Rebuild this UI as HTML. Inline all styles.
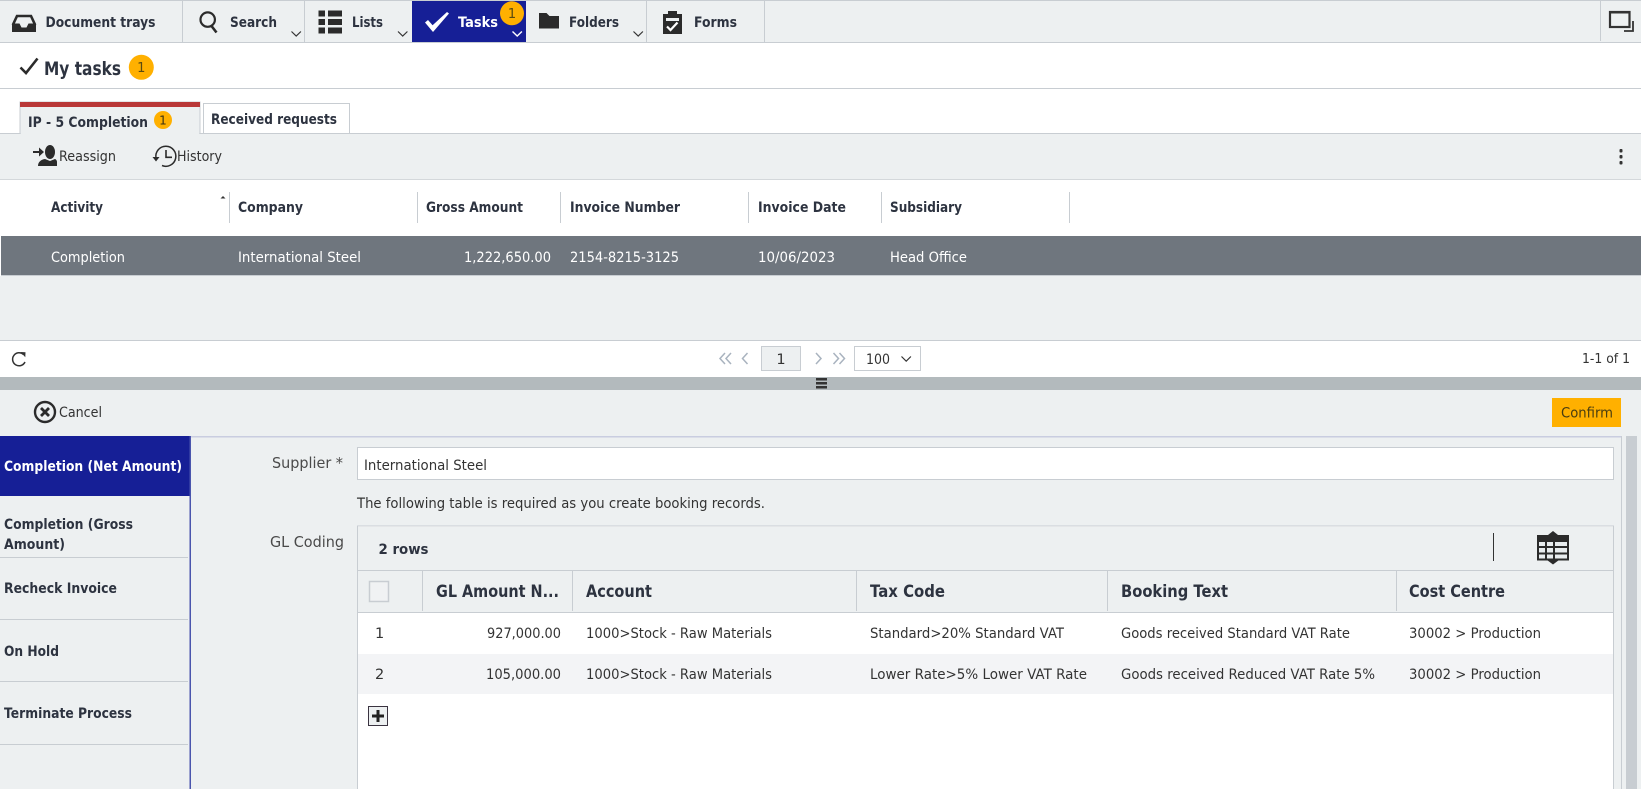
<!DOCTYPE html>
<html><head><meta charset="utf-8"><title>My tasks</title>
<style>
html,body{margin:0;padding:0;background:#fff;width:1641px;height:789px;overflow:hidden}
svg{display:block}
text{font-family:"DejaVu Sans","Liberation Sans",sans-serif;font-size:14.5px;fill:#333;}
.b{font-weight:bold;fill:#2d3340}
.w{fill:#fff}
.h{font-size:16.5px}
.l{fill:#4a4a4a;font-size:15px}
</style></head><body>
<svg width="1641" height="789" viewBox="0 0 1641 789" xmlns="http://www.w3.org/2000/svg">
<!-- top bar -->
<rect x="0" y="0" width="1641" height="42" fill="#edf0f1"/>
<rect x="0" y="0" width="1641" height="1" fill="#c8cdd2"/>
<rect x="0" y="42" width="1641" height="1" fill="#c8cdd2"/>
<g fill="#c8cdd2"><rect x="182" y="1" width="1" height="41"/><rect x="304" y="1" width="1" height="41"/><rect x="646" y="1" width="1" height="41"/><rect x="764" y="1" width="1" height="41"/><rect x="1600" y="1" width="1" height="40"/></g>
<rect x="412" y="1" width="114" height="41" fill="#161f96"/>
<!-- tray -->
<path d="M12.8 25 L17 16 H31 L35.2 25" fill="none" stroke="#2b2b2b" stroke-width="2.6"/>
<path d="M12 23.500 h7.500 l2 4 h5 l2-4 h7.500 v8.500 h-24z" fill="#2b2b2b"/>
<text class="b" x="45.5" y="27" textLength="110" lengthAdjust="spacingAndGlyphs">Document trays</text>
<!-- search -->
<circle cx="207.7" cy="19.6" r="7.2" fill="none" stroke="#2b2b2b" stroke-width="2.2"/>
<path d="M211.5 26 L216.5 32.5" stroke="#2b2b2b" stroke-width="2.6" fill="none"/>
<text class="b" x="230" y="27" textLength="47" lengthAdjust="spacingAndGlyphs">Search</text>
<!-- lists -->
<g fill="#2b2b2b"><rect x="318.5" y="10.5" width="6.5" height="6"/><rect x="328" y="10.5" width="14" height="6"/><rect x="318.5" y="19" width="6.5" height="6"/><rect x="328" y="19" width="14" height="6"/><rect x="318.5" y="27.5" width="6.5" height="6"/><rect x="328" y="27.5" width="14" height="6"/></g>
<text class="b" x="352" y="27" textLength="31" lengthAdjust="spacingAndGlyphs">Lists</text>
<!-- tasks -->
<path d="M425 22.5 l3-2.5 4.6 5.2 L447 12 l2 1.5 L433 32 z" fill="#fff"/>
<text class="b w" style="fill:#fff" x="458" y="27" textLength="40" lengthAdjust="spacingAndGlyphs">Tasks</text>
<circle cx="512" cy="13.3" r="12" fill="#ffb000"/>
<text x="512" y="18" text-anchor="middle" style="fill:#5a4a10;font-size:13px">1</text>
<!-- folders -->
<path d="M539 13 h7.5 l3 3 H559 v12.5 h-20z" fill="#2b2b2b"/>
<text class="b" x="569" y="27" textLength="50" lengthAdjust="spacingAndGlyphs">Folders</text>
<!-- forms -->
<path d="M663 14 h5 v-3 h9 v3 h5 v20 h-19z" fill="#2b2b2b"/>
<rect x="666" y="18" width="13" height="3" fill="#edf0f1"/>
<path d="M667 26.5 l3.5 3.5 7-7.5" fill="none" stroke="#fff" stroke-width="2.2"/>
<text class="b" x="694" y="27" textLength="43" lengthAdjust="spacingAndGlyphs">Forms</text>
<!-- chevrons -->
<g fill="none" stroke="#333" stroke-width="1.2"><path d="M291.5 31.5 l4.7 4.5 4.7-4.5"/><path d="M398 31.5 l4.7 4.5 4.7-4.5"/><path d="M633.5 31.5 l4.7 4.5 4.7-4.5"/></g>
<path d="M512.5 31.5 l4.7 4.5 4.7-4.5" fill="none" stroke="#fff" stroke-width="1.4"/>
<!-- window icon -->
<rect x="1610" y="12" width="19.5" height="15" fill="none" stroke="#333" stroke-width="2.2"/>
<rect x="1610" y="11" width="20" height="2.5" fill="#333"/>
<path d="M1633 21 V31 H1624" fill="none" stroke="#333" stroke-width="1.8"/>

<!-- my tasks -->
<rect x="0" y="43" width="1641" height="45" fill="#fff"/>
<rect x="0" y="88" width="1641" height="1" fill="#c8cdd2"/>
<path d="M20.5 67.500 L26 73 L37.5 58.500" fill="none" stroke="#2b2b2b" stroke-width="2.600"/>
<text class="b" style="font-size:19px" x="44" y="75" textLength="77" lengthAdjust="spacingAndGlyphs">My tasks</text>
<circle cx="141.3" cy="67.3" r="12.5" fill="#ffb000"/>
<text x="141.3" y="72" text-anchor="middle" style="fill:#5a4a10;font-size:13px">1</text>

<!-- tabs -->
<rect x="0" y="133" width="1641" height="1" fill="#c8cdd2"/>
<rect x="20" y="102" width="180" height="32" fill="#edf0f1" stroke="#c8cdd2" stroke-width="1"/>
<rect x="20" y="102" width="180" height="5" fill="#b93838"/>
<rect x="21" y="133" width="178" height="1" fill="#edf0f1"/>
<text class="b" x="28" y="127" textLength="120" lengthAdjust="spacingAndGlyphs">IP - 5 Completion</text>
<circle cx="163" cy="120" r="9" fill="#ffb000"/>
<text x="163" y="124.5" text-anchor="middle" style="fill:#3a3010;font-size:12px">1</text>
<path d="M203.5 133 V103.5 H349.5 V133" fill="#fff" stroke="#c8cdd2"/>
<text class="b" x="211" y="124" textLength="126" lengthAdjust="spacingAndGlyphs">Received requests</text>

<!-- toolbar -->
<rect x="0" y="134" width="1641" height="45" fill="#edf0f1"/>
<rect x="0" y="179" width="1641" height="1" fill="#d4d8db"/>
<path d="M33 151 h6 v-3.5 l5 4.5 -5 4.5 v-3.5 h-6z" fill="#2b2b2b"/>
<ellipse cx="50" cy="152" rx="5" ry="7" fill="#2b2b2b"/>
<path d="M38 166 c0-4 3-6.5 7-7 l5 2 5-2 c1.500 .5 2 2 2 3 v4z" fill="#2b2b2b"/>
<text x="59" y="161" textLength="57" lengthAdjust="spacingAndGlyphs">Reassign</text>
<path d="M156 158 A10 10 0 1 1 162 165.500" fill="none" stroke="#2b2b2b" stroke-width="1.5"/>
<path d="M152.500 157 h7 l-3.500 4.500z" fill="#2b2b2b"/>
<path d="M166 150 v7.300 h6" fill="none" stroke="#2b2b2b" stroke-width="1.6"/>
<text x="177" y="161" textLength="45" lengthAdjust="spacingAndGlyphs">History</text>
<g fill="#333"><rect x="1619.500" y="149" width="3" height="3.500" rx="1"/><rect x="1619.500" y="155" width="3" height="3.500" rx="1"/><rect x="1619.500" y="161" width="3" height="3.500" rx="1"/></g>

<!-- grid -->
<rect x="1" y="180" width="1640" height="56" fill="#fff"/>
<g fill="#c8cdd2"><rect x="229" y="192" width="1" height="31"/><rect x="417" y="192" width="1" height="31"/><rect x="560" y="192" width="1" height="31"/><rect x="748" y="192" width="1" height="31"/><rect x="881" y="192" width="1" height="31"/><rect x="1069" y="192" width="1" height="31"/></g>
<path d="M220.500 198.500 l2.500-2.500 2.500 2.500z" fill="#333"/>
<text class="b" x="51" y="212" textLength="52" lengthAdjust="spacingAndGlyphs">Activity</text>
<text class="b" x="238" y="212" textLength="65" lengthAdjust="spacingAndGlyphs">Company</text>
<text class="b" x="426" y="212" textLength="97" lengthAdjust="spacingAndGlyphs">Gross Amount</text>
<text class="b" x="570" y="212" textLength="110" lengthAdjust="spacingAndGlyphs">Invoice Number</text>
<text class="b" x="758" y="212" textLength="88" lengthAdjust="spacingAndGlyphs">Invoice Date</text>
<text class="b" x="890" y="212" textLength="72" lengthAdjust="spacingAndGlyphs">Subsidiary</text>
<rect x="1" y="236" width="1640" height="39" fill="#6f767e"/>
<rect x="1" y="275" width="1640" height="1" fill="#c8cdd2"/>
<text class="w" x="51" y="262" textLength="74" lengthAdjust="spacingAndGlyphs">Completion</text>
<text class="w" x="238" y="262" textLength="123" lengthAdjust="spacingAndGlyphs">International Steel</text>
<text class="w" x="464" y="262" textLength="87" lengthAdjust="spacingAndGlyphs">1,222,650.00</text>
<text class="w" x="570" y="262" textLength="109" lengthAdjust="spacingAndGlyphs">2154-8215-3125</text>
<text class="w" x="758" y="262" textLength="77" lengthAdjust="spacingAndGlyphs">10/06/2023</text>
<text class="w" x="890" y="262" textLength="77" lengthAdjust="spacingAndGlyphs">Head Office</text>
<rect x="0" y="276" width="1641" height="64" fill="#edf0f1"/>

<!-- pager -->
<rect x="0" y="340" width="1641" height="1" fill="#c8cdd2"/>
<rect x="0" y="341" width="1641" height="36" fill="#fff"/>
<path d="M23.500 354.500 A6.500 6.500 0 1 0 25 362" fill="none" stroke="#333" stroke-width="1.500"/>
<path d="M20.500 352 l5 .2 -.2 5z" fill="#333"/>
<g fill="none" stroke="#a9b3bf" stroke-width="1.500">
<path d="M725 353 l-5 5.500 5 5.500M731 353 l-5 5.500 5 5.500"/>
<path d="M747.500 353 l-5 5.500 5 5.500"/>
<path d="M816 353 l5 5.500 -5 5.500"/>
<path d="M833.500 353 l5 5.500 -5 5.500M839.500 353 l5 5.500 -5 5.500"/>
</g>
<rect x="761.500" y="346.500" width="39" height="24" fill="#edf0f1" stroke="#c8cdd2"/>
<text x="781" y="364" text-anchor="middle">1</text>
<rect x="854.500" y="346.500" width="66" height="24" fill="#fff" stroke="#c8cdd2"/>
<text x="866" y="364" textLength="24" lengthAdjust="spacingAndGlyphs">100</text>
<path d="M901.500 356.500 l4.700 4.700 4.700-4.700" fill="none" stroke="#333" stroke-width="1.200"/>
<text x="1582" y="363" textLength="48" lengthAdjust="spacingAndGlyphs" style="font-size:13.5px">1-1 of 1</text>

<!-- splitter -->
<rect x="0" y="377" width="1641" height="13" fill="#b3babd"/>
<g fill="#333"><rect x="816" y="378" width="11" height="2.500"/><rect x="816" y="382" width="11" height="2.500"/><rect x="816" y="386" width="11" height="2.500"/></g>

<!-- action bar + lower bg -->
<rect x="0" y="390" width="1641" height="399" fill="#edf0f1"/>
<circle cx="45" cy="412" r="10" fill="none" stroke="#2b2b2b" stroke-width="2.400"/>
<path d="M41 408 l8 8M49 408 l-8 8" stroke="#2b2b2b" stroke-width="2.800" fill="none"/>
<text x="59" y="417" textLength="43" lengthAdjust="spacingAndGlyphs">Cancel</text>
<rect x="1552" y="398" width="69" height="29" fill="#ffb000"/>
<text x="1561" y="417.500" textLength="52" lengthAdjust="spacingAndGlyphs" style="fill:#4a3d10">Confirm</text>
<rect x="0" y="436" width="1621" height="1.500" fill="#c9cde0"/>

<!-- scrollbar -->
<rect x="1621" y="436" width="1" height="353" fill="#c8cdd2"/>
<rect x="1626" y="436" width="11" height="353" fill="#c8cdd2"/>

<!-- left nav -->
<rect x="0" y="436" width="190" height="60" fill="#161f96"/>
<rect x="189.500" y="436" width="1.500" height="353" fill="#4a55ad"/>
<text style="font-weight:bold;fill:#fff" x="4" y="471" textLength="178" lengthAdjust="spacingAndGlyphs">Completion (Net Amount)</text>
<text class="b" x="4" y="529" textLength="129" lengthAdjust="spacingAndGlyphs">Completion (Gross</text>
<text class="b" x="4" y="549" textLength="61" lengthAdjust="spacingAndGlyphs">Amount)</text>
<rect x="0" y="557" width="188" height="1" fill="#c8cdd2"/>
<text class="b" x="4" y="593" textLength="113" lengthAdjust="spacingAndGlyphs">Recheck Invoice</text>
<rect x="0" y="619" width="188" height="1" fill="#c8cdd2"/>
<text class="b" x="4" y="656" textLength="55" lengthAdjust="spacingAndGlyphs">On Hold</text>
<rect x="0" y="681" width="188" height="1" fill="#c8cdd2"/>
<text class="b" x="4" y="718" textLength="128" lengthAdjust="spacingAndGlyphs">Terminate Process</text>
<rect x="0" y="744" width="188" height="1" fill="#c8cdd2"/>

<!-- form -->
<text class="l" x="272" y="468" textLength="71" lengthAdjust="spacingAndGlyphs">Supplier *</text>
<rect x="357.500" y="447.500" width="1256" height="32" fill="#fff" stroke="#c8cdd2"/>
<text x="364" y="470" textLength="123" lengthAdjust="spacingAndGlyphs">International Steel</text>
<text x="357" y="508" textLength="408" lengthAdjust="spacingAndGlyphs">The following table is required as you create booking records.</text>
<text class="l" x="270" y="547" textLength="74" lengthAdjust="spacingAndGlyphs">GL Coding</text>

<!-- GL box -->
<rect x="357.500" y="526" width="1256" height="270" fill="#fff" stroke="#c8cdd2"/>
<rect x="358" y="527" width="1255" height="85" fill="#edf0f1"/>
<rect x="358" y="570" width="1255" height="1" fill="#c8cdd2"/>
<rect x="358" y="612" width="1255" height="1" fill="#c8cdd2"/>
<text class="b" x="378.500" y="554" textLength="50" lengthAdjust="spacingAndGlyphs">2 rows</text>
<rect x="1493" y="533" width="1" height="28" fill="#333"/>
<!-- table icon -->
<path d="M1537 535 h11 l5-4 5 4 h11 v7 h-32z" fill="#2b2b2b"/>
<rect x="1538" y="541" width="30" height="18.500" fill="#e8ecee" stroke="#2b2b2b" stroke-width="2"/>
<path d="M1546 541 V560 M1554 541 V560 M1537 547 H1569 M1537 553.500 H1569" stroke="#2b2b2b" stroke-width="2" fill="none"/>
<path d="M1547 560 h12 l-6 4.500z" fill="#2b2b2b"/>
<!-- header -->
<g fill="#c8cdd2"><rect x="422" y="571" width="1" height="40"/><rect x="572" y="571" width="1" height="40"/><rect x="856" y="571" width="1" height="40"/><rect x="1107" y="571" width="1" height="40"/><rect x="1396" y="571" width="1" height="40"/></g>
<rect x="369.500" y="581.500" width="19" height="20" fill="#f0f2f3" stroke="#c8cdd2" stroke-width="1.500"/>
<text class="b h" x="436" y="597" textLength="123" lengthAdjust="spacingAndGlyphs">GL Amount N...</text>
<text class="b h" x="586" y="597" textLength="66" lengthAdjust="spacingAndGlyphs">Account</text>
<text class="b h" x="870" y="597" textLength="75" lengthAdjust="spacingAndGlyphs">Tax Code</text>
<text class="b h" x="1121" y="597" textLength="107" lengthAdjust="spacingAndGlyphs">Booking Text</text>
<text class="b h" x="1409" y="597" textLength="96" lengthAdjust="spacingAndGlyphs">Cost Centre</text>
<!-- rows -->
<rect x="358" y="654" width="1255" height="40" fill="#f3f4f6"/>
<text x="375" y="638">1</text>
<text x="487" y="638" textLength="74" lengthAdjust="spacingAndGlyphs">927,000.00</text>
<text x="586" y="638" textLength="186" lengthAdjust="spacingAndGlyphs">1000&gt;Stock - Raw Materials</text>
<text x="870" y="638" textLength="194" lengthAdjust="spacingAndGlyphs">Standard&gt;20% Standard VAT</text>
<text x="1121" y="638" textLength="229" lengthAdjust="spacingAndGlyphs">Goods received Standard VAT Rate</text>
<text x="1409" y="638" textLength="132" lengthAdjust="spacingAndGlyphs">30002 &gt; Production</text>
<text x="375" y="679">2</text>
<text x="486" y="679" textLength="75" lengthAdjust="spacingAndGlyphs">105,000.00</text>
<text x="586" y="679" textLength="186" lengthAdjust="spacingAndGlyphs">1000&gt;Stock - Raw Materials</text>
<text x="870" y="679" textLength="217" lengthAdjust="spacingAndGlyphs">Lower Rate&gt;5% Lower VAT Rate</text>
<text x="1121" y="679" textLength="254" lengthAdjust="spacingAndGlyphs">Goods received Reduced VAT Rate 5%</text>
<text x="1409" y="679" textLength="132" lengthAdjust="spacingAndGlyphs">30002 &gt; Production</text>
<!-- plus -->
<rect x="368.500" y="706.500" width="19" height="19" fill="#edf0f1" stroke="#3a3340"/>
<path d="M378 710 V722 M372 716 H384" stroke="#222" stroke-width="3" fill="none"/>
</svg>
</body></html>
